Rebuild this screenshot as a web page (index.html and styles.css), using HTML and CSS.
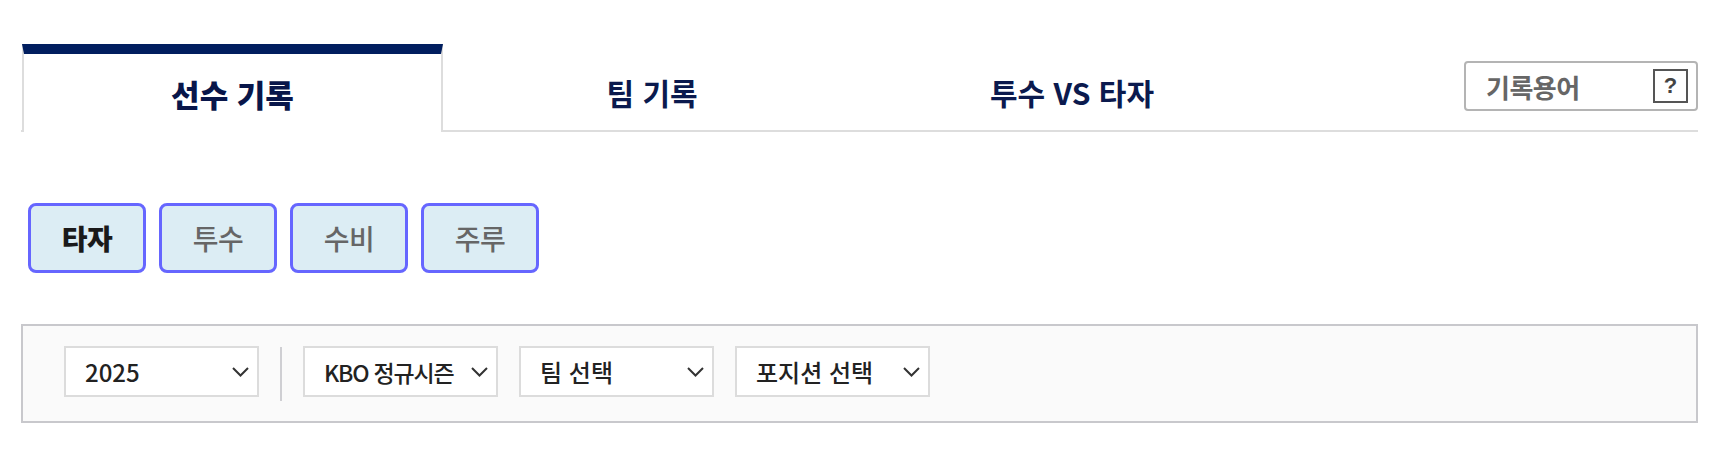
FILE: index.html
```html
<!DOCTYPE html>
<html lang="ko">
<head>
<meta charset="utf-8">
<title>기록실</title>
<link rel="stylesheet" href="styles.css">
</head>
<body>
<div class="page">
  <div class="tabs">
    <div class="tab active">선수 기록</div>
    <div class="tab">팀 기록</div>
    <div class="tab">투수 VS 타자</div>
    <div class="glossary">
      <span class="glossary-label">기록용어</span>
      <span class="glossary-q">?</span>
    </div>
  </div>

  <div class="cats">
    <button class="cat on">타자</button>
    <button class="cat">투수</button>
    <button class="cat">수비</button>
    <button class="cat">주루</button>
  </div>

  <div class="filters">
    <div class="sel"><span>2025</span>
      <svg class="chev" width="17" height="10" viewBox="0 0 17 10"><path d="M1 1 L8.5 8.5 L16 1" fill="none" stroke="#333" stroke-width="2"/></svg>
    </div>
    <div class="divider"></div>
    <div class="sel"><span class="tight">KBO 정규시즌</span>
      <svg class="chev" width="17" height="10" viewBox="0 0 17 10"><path d="M1 1 L8.5 8.5 L16 1" fill="none" stroke="#333" stroke-width="2"/></svg>
    </div>
    <div class="sel"><span>팀 선택</span>
      <svg class="chev" width="17" height="10" viewBox="0 0 17 10"><path d="M1 1 L8.5 8.5 L16 1" fill="none" stroke="#333" stroke-width="2"/></svg>
    </div>
    <div class="sel"><span>포지션 선택</span>
      <svg class="chev" width="17" height="10" viewBox="0 0 17 10"><path d="M1 1 L8.5 8.5 L16 1" fill="none" stroke="#333" stroke-width="2"/></svg>
    </div>
  </div>
</div>
</body>
</html>
```

FILE: styles.css
```css
* { box-sizing: border-box; }
html, body { margin: 0; padding: 0; background: #fff; }
body {
  font-family: "Noto Sans CJK KR", "Noto Sans", sans-serif;
  color: #222;
}
.page {
  width: 1677px;
  margin-left: 21px;
  padding-top: 44px;
}

/* tabs */
.tabs {
  display: flex;
  align-items: flex-start;
  border-bottom: 2px solid #dddddd;
  height: 88px;
}
.tab {
  width: 420px;
  height: 86px;
  border-top: 10px solid transparent;
  display: flex;
  align-items: center;
  justify-content: center;
  font-size: 30px;
  font-weight: 700;
  color: #0b1a4e;
  letter-spacing: 0;
}
.tab.active {
  height: 88px;
  margin-left: 1px;
  margin-bottom: -2px;
  border-top: 10px solid #011e5f;
  border-left: 2px solid #dddddd;
  border-right: 2px solid #dddddd;
  background: #fff;
  font-size: 31px;
  font-weight: 900;
  color: #08164a;
  width: 421px;
}
.tab:nth-child(2) { margin-left: -1px; }
.glossary {
  margin-left: auto;
  margin-top: 17px;
  width: 234px;
  height: 50px;
  border: 2px solid #b4b4b4;
  border-radius: 4px;
  display: flex;
  align-items: center;
  justify-content: space-between;
  padding: 0 8px 0 20px;
}
.glossary-label {
  font-size: 26px;
  font-weight: 700;
  color: #666;
  letter-spacing: -0.5px;
}
.glossary-q {
  width: 35px;
  height: 34px;
  border: 2px solid #555;
  display: flex;
  align-items: center;
  justify-content: center;
  font-size: 22px;
  font-weight: 700;
  color: #444;
  font-family: "Liberation Sans", sans-serif;
}

/* category buttons */
.cats {
  display: flex;
  gap: 13px;
  margin-top: 71px;
  padding-left: 7px;
}
.cat {
  width: 118px;
  height: 70px;
  border: 3px solid #6666ff;
  border-radius: 8px;
  background: #dcedf4;
  font-family: inherit;
  font-size: 28px;
  font-weight: 500;
  color: #666;
  padding: 0;
  letter-spacing: -0.5px;
}
.cat.on {
  font-weight: 900;
  color: #1a1a1a;
}

/* filters */
.filters {
  margin-top: 51px;
  height: 99px;
  border: 2px solid #c8c8cc;
  background: #fafafa;
  display: flex;
  align-items: flex-start;
  gap: 21px;
  padding: 20px 0 0 41px;
}
.sel {
  width: 195px;
  height: 51px;
  border: 2px solid #dcdcdc;
  background: #fff;
  display: flex;
  align-items: center;
  justify-content: space-between;
  padding: 0 8px 0 19px;
  font-size: 24px;
  color: #222;
  font-weight: 500;
  letter-spacing: 0;
}
.sel .tight {
  font-size: 23px;
  letter-spacing: -1.2px;
  white-space: nowrap;
}
.sel .chev { flex: none; }
.divider {
  width: 2px;
  height: 54px;
  margin-top: 1px;
  background: #cfcfd3;
}
```
